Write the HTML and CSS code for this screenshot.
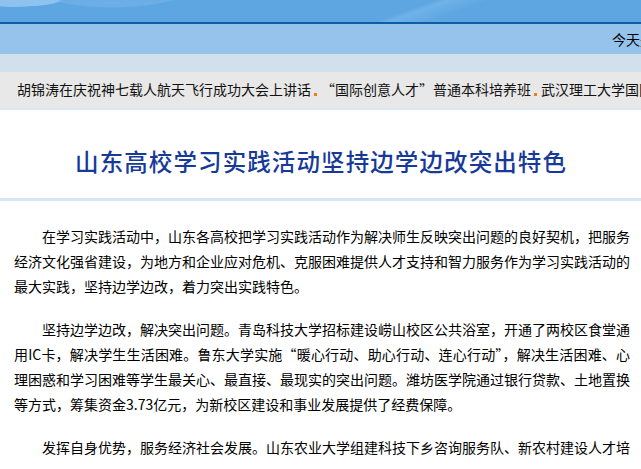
FILE: index.html
```html
<!DOCTYPE html>
<html lang="zh-CN">
<head>
<meta charset="utf-8">
<title>山东高校学习实践活动坚持边学边改突出特色</title>
<link rel="stylesheet" href="styles.css">
</head>
<body>
<div class="page">
  <div class="banner"></div>
  <div class="rule"></div>
  <div class="datebar">今天是：2008年11月6日 星期四</div>
  <div class="band"></div>
  <div class="ticker">胡锦涛在庆祝神七载人航天飞行成功大会上讲话<span class="dot"></span><span class="q">“</span>国际创意人才<span class="q">”</span>普通本科培养班<span class="dot"></span>武汉理工大学国际教育学院招生简章</div>
  <h1 class="title">山东高校学习实践活动坚持边学边改突出特色</h1>
  <div class="article">
    <p>在学习实践活动中，山东各高校把学习实践活动作为解决师生反映突出问题的良好契机，把服务经济文化强省建设，为地方和企业应对危机、克服困难提供人才支持和智力服务作为学习实践活动的最大实践，坚持边学边改，着力突出实践特色。</p>
    <p>坚持边学边改，解决突出问题。青岛科技大学招标建设崂山校区公共浴室，开通了两校区食堂通用IC卡，解决学生生活困难。鲁东大学实施<span class="q">“</span>暖心行动、助心行动、连心行动<span class="q">”</span>，解决生活困难、心理困惑和学习困难等学生最关心、最直接、最现实的突出问题。潍坊医学院通过银行贷款、土地置换等方式，筹集资金3.73亿元，为新校区建设和事业发展提供了经费保障。</p>
    <p class="last">发挥自身优势，服务经济社会发展。山东农业大学组建科技下乡咨询服务队、新农村建设人才培训班，深入基层开展科技服务活动。</p>
  </div>
</div>
</body>
</html>
```

FILE: styles.css
```css
html, body {
  margin: 0;
  padding: 0;
  background: #ffffff;
}

body {
  font-family: "Noto Sans CJK SC", "Noto Sans", sans-serif;
  color: #000000;
  overflow: hidden;
}

.page {
  width: 641px;
  height: 469px;
  overflow: hidden;
}

.banner {
  height: 22px;
  background:
    radial-gradient(ellipse 48px 7px at 14px 0, #8ec3ef 0 92%, rgba(142,195,239,0) 100%),
    radial-gradient(ellipse 95px 30px at 112px -22px, rgba(120,180,235,0.55) 0 96%, rgba(120,180,235,0) 100%),
    linear-gradient(160deg, rgba(255,255,255,0) 0 62%, rgba(130,190,240,0.5) 64%, rgba(255,255,255,0) 70%),
    #5ea6e1;
}

.rule {
  height: 2px;
  background: #0d5ca6;
}

.datebar {
  height: 30px;
  background: #96c3ec;
  font-size: 14px;
  line-height: 30px;
  padding-left: 612px;
  white-space: nowrap;
  overflow: hidden;
  color: #000;
}

.band {
  height: 18px;
  background: #d2e0ec;
}

.ticker {
  height: 36px;
  background: #e8e8e8;
  border-bottom: 2px solid #dbe8f3;
  font-size: 14px;
  line-height: 34px;
  padding-left: 17px;
  white-space: nowrap;
  overflow: hidden;
  color: #111;
}

.dot {
  display: inline-block;
  width: 3px;
  height: 3px;
  background: #f07a1c;
  margin: 0 4px 0 3px;
  vertical-align: -1px;
}

.q {
  font-feature-settings: "fwid" 1;
}

.title {
  margin: 0;
  padding: 35px 0 21px;
  font-size: 23.5px;
  line-height: 32px;
  font-weight: 500;
  letter-spacing: 1.1px;
  text-indent: 1.1px;
  text-align: center;
  color: #173a98;
  border-bottom: 3px solid #d5e6f4;
}

.article {
  padding: 23px 11px 0 14px;
  font-size: 14px;
  line-height: 25px;
}

.article p {
  margin: 0 0 18px;
  text-indent: 2em;
  text-align: justify;
}

.article p.last {
  height: 25px;
  overflow: hidden;
}
```
